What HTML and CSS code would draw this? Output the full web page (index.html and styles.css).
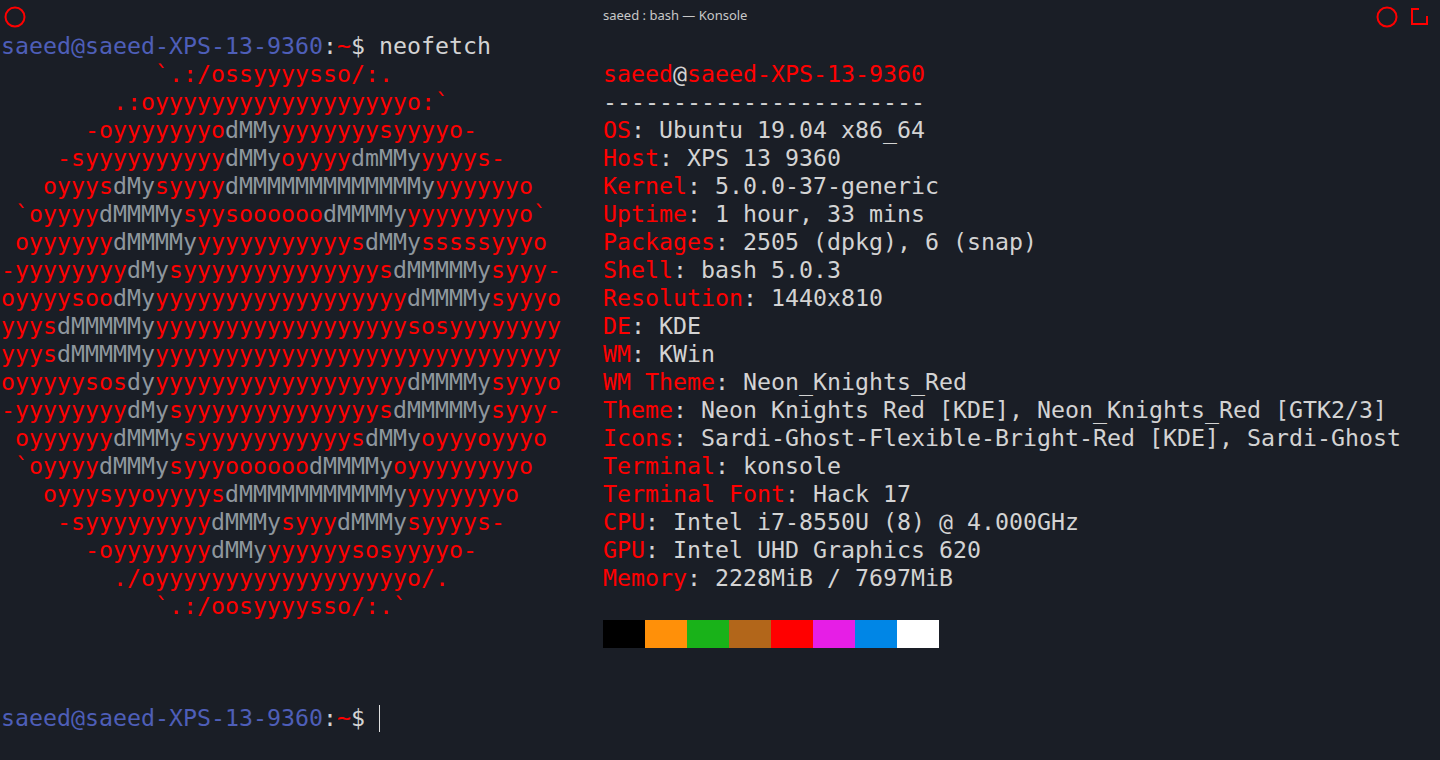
FILE: index.html
```html
<!DOCTYPE html>
<html lang="en">
<head>
<meta charset="utf-8">
<title>saeed : bash — Konsole</title>
<link rel="stylesheet" href="styles.css">
</head>
<body>
<div class="window">
<header class="titlebar">
<svg class="btn" width="22" height="22" viewBox="0 0 22 22"><circle cx="11" cy="11" r="9.5" fill="none" stroke="#f00" stroke-width="2"/></svg>
<span class="title">saeed : bash — Konsole</span>
<svg class="btn" width="22" height="22" viewBox="0 0 22 22"><circle cx="11" cy="11" r="9.5" fill="none" stroke="#f00" stroke-width="2"/></svg>
<svg class="btn max" width="17" height="17" viewBox="0 0 17 17"><path d="M8 1H1V16H16V8" fill="none" stroke="#f00" stroke-width="2"/></svg>
</header>
<main class="term">
<pre class="line"><span class="blue">saeed@saeed-XPS-13-9360</span>:<span class="red">~</span>$ neofetch</pre>
<div class="fetch">
<pre class="art red">           `.:/ossyyyysso/:.
        .:oyyyyyyyyyyyyyyyyyyo:`
      -oyyyyyyyo<b>dMMy</b>yyyyyyysyyyyo-
    -syyyyyyyyyy<b>dMMy</b>oyyyy<b>dmMMy</b>yyyys-
   oyyys<b>dMy</b>syyyy<b>dMMMMMMMMMMMMMy</b>yyyyyyo
 `oyyyy<b>dMMMMy</b>syysoooooo<b>dMMMMy</b>yyyyyyyyo`
 oyyyyyy<b>dMMMMy</b>yyyyyyyyyyys<b>dMMy</b>sssssyyyo
-yyyyyyyy<b>dMy</b>syyyyyyyyyyyyyys<b>dMMMMMy</b>syyy-
oyyyysoo<b>dMy</b>yyyyyyyyyyyyyyyyyy<b>dMMMMy</b>syyyo
yyys<b>dMMMMMy</b>yyyyyyyyyyyyyyyyyysosyyyyyyyy
yyys<b>dMMMMMy</b>yyyyyyyyyyyyyyyyyyyyyyyyyyyyy
oyyyyysos<b>dy</b>yyyyyyyyyyyyyyyyyy<b>dMMMMy</b>syyyo
-yyyyyyyy<b>dMy</b>syyyyyyyyyyyyyys<b>dMMMMMy</b>syyy-
 oyyyyyy<b>dMMMy</b>syyyyyyyyyyys<b>dMMy</b>oyyyoyyyo
 `oyyyy<b>dMMMy</b>syyyoooooo<b>dMMMMy</b>oyyyyyyyyo
   oyyysyyoyyyys<b>dMMMMMMMMMMMy</b>yyyyyyyo
    -syyyyyyyyy<b>dMMMy</b>syyy<b>dMMMy</b>syyyys-
      -oyyyyyyy<b>dMMy</b>yyyyyysosyyyyo-
        ./oyyyyyyyyyyyyyyyyyyo/.
           `.:/oosyyyysso/:.`</pre>
<div class="info">
<pre class="line"><span class="red">saeed</span>@<span class="red">saeed-XPS-13-9360</span></pre>
<pre class="line">-----------------------</pre>
<pre class="line"><span class="red">OS</span>: Ubuntu 19.04 x86_64</pre>
<pre class="line"><span class="red">Host</span>: XPS 13 9360</pre>
<pre class="line"><span class="red">Kernel</span>: 5.0.0-37-generic</pre>
<pre class="line"><span class="red">Uptime</span>: 1 hour, 33 mins</pre>
<pre class="line"><span class="red">Packages</span>: 2505 (dpkg), 6 (snap)</pre>
<pre class="line"><span class="red">Shell</span>: bash 5.0.3</pre>
<pre class="line"><span class="red">Resolution</span>: 1440x810</pre>
<pre class="line"><span class="red">DE</span>: KDE</pre>
<pre class="line"><span class="red">WM</span>: KWin</pre>
<pre class="line"><span class="red">WM Theme</span>: Neon_Knights_Red</pre>
<pre class="line"><span class="red">Theme</span>: Neon Knights Red [KDE], Neon_Knights_Red [GTK2/3]</pre>
<pre class="line"><span class="red">Icons</span>: Sardi-Ghost-Flexible-Bright-Red [KDE], Sardi-Ghost</pre>
<pre class="line"><span class="red">Terminal</span>: konsole</pre>
<pre class="line"><span class="red">Terminal Font</span>: Hack 17</pre>
<pre class="line"><span class="red">CPU</span>: Intel i7-8550U (8) @ 4.000GHz</pre>
<pre class="line"><span class="red">GPU</span>: Intel UHD Graphics 620</pre>
<pre class="line"><span class="red">Memory</span>: 2228MiB / 7697MiB</pre>
<div class="palette">
<i class="sw c0"></i><i class="sw c1"></i><i class="sw c2"></i><i class="sw c3"></i><i class="sw c4"></i><i class="sw c5"></i><i class="sw c6"></i><i class="sw c7"></i>
</div>
</div>
</div>
<pre class="line prompt"><span class="blue">saeed@saeed-XPS-13-9360</span>:<span class="red">~</span>$ <span class="cursor"></span></pre>
</main>
</div>
</body>
</html>
```
FILE: styles.css
```css
html, body {
  margin: 0;
  height: 100%;
  background: #1a1e26;
}
.window {
  height: 760px;
  overflow: hidden;
  display: flex;
  flex-direction: column;
}
.titlebar {
  height: 32px;
  display: flex;
  align-items: center;
  padding: 1px 12px 0 4px;
  box-sizing: border-box;
}
.btn { display: block; flex: none; }
.title {
  margin-left: 577px;
  margin-bottom: 3px;
  flex: 1;
  font: 13px/26px "Noto Sans", sans-serif;
  color: #c8c8c8;
}
.max { margin-left: 13px; }
.term {
  padding-left: 1px;
  font-family: "DejaVu Sans Mono", monospace;
  font-size: 23.25px;
  line-height: 28px;
  color: #d3d3d3;
}
pre {
  margin: 0;
  font: inherit;
}
.line { height: 28px; }
.red { color: #f00; }
.blue { color: #4e5eb8; }
b { font-weight: normal; color: #8e969e; }
.fetch {
  display: grid;
  grid-template-columns: 602px 1fr;
}
.palette {
  display: flex;
  margin-top: 28px;
}
.sw { display: block; width: 42px; height: 28px; }
.c0 { background: #000; }
.c1 { background: #ff9009; }
.c2 { background: #19b219; }
.c3 { background: #b2661a; }
.c4 { background: #f00; }
.c5 { background: #e61ee6; }
.c6 { background: #0086e6; }
.c7 { background: #fff; }
.prompt { margin-top: 56px; }
.cursor {
  display: inline-block;
  width: 1px;
  height: 27px;
  margin-top: 1px;
  background: #e0e0e0;
  vertical-align: top;
}
```
